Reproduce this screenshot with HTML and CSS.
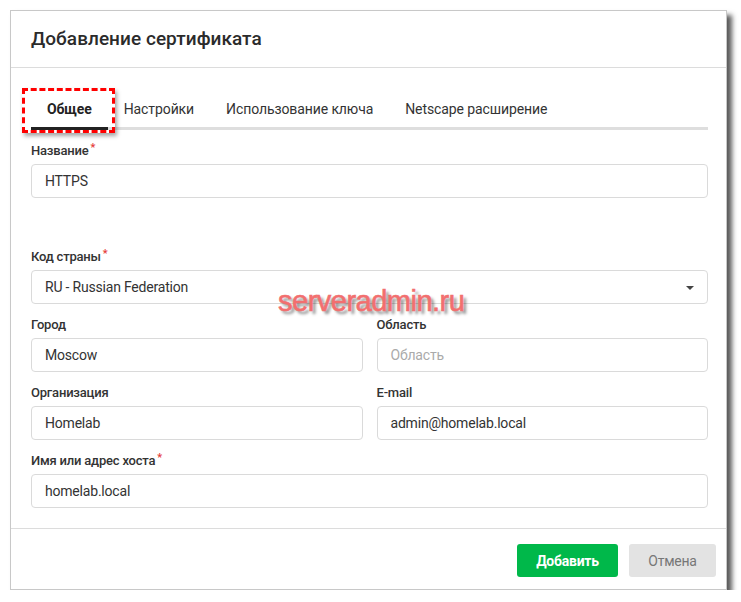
FILE: index.html
```html
<!DOCTYPE html>
<html lang="ru">
<head>
<meta charset="utf-8">
<title>Добавление сертификата</title>
<link rel="stylesheet" href="styles.css">
</head>
<body>
<div class="dialog">
  <div class="header">Добавление сертификата</div>
  <div class="body">
    <div class="tabs">
      <div class="tab active">Общее<span class="mark"></span></div>
      <div class="tab">Настройки</div>
      <div class="tab">Использование ключа</div>
      <div class="tab">Netscape расширение</div>
    </div>
    <div class="field first">
      <div class="label">Название<span class="req">*</span></div>
      <div class="input">HTTPS</div>
    </div>
    <div class="field gap">
      <div class="label">Код страны<span class="req">*</span></div>
      <div class="input select">RU - Russian Federation<span class="caret"></span></div>
    </div>
    <div class="row">
      <div class="field">
        <div class="label">Город</div>
        <div class="input">Moscow</div>
      </div>
      <div class="field">
        <div class="label">Область</div>
        <div class="input placeholder">Область</div>
      </div>
    </div>
    <div class="row">
      <div class="field">
        <div class="label">Организация</div>
        <div class="input">Homelab</div>
      </div>
      <div class="field">
        <div class="label">E-mail</div>
        <div class="input">admin@homelab.local</div>
      </div>
    </div>
    <div class="field">
      <div class="label">Имя или адрес хоста<span class="req">*</span></div>
      <div class="input">homelab.local</div>
    </div>
  </div>
  <div class="footer">
    <button class="btn primary">Добавить</button>
    <button class="btn secondary">Отмена</button>
  </div>
  <div class="watermark">serveradmin.ru</div>
</div>
</body>
</html>
```
FILE: styles.css
```css
html, body {
  margin: 0;
  padding: 0;
  background: #fff;
}
body {
  font-family: Roboto, "Liberation Sans", Arial, sans-serif;
  color: #333;
}
.dialog {
  position: relative;
  margin: 10px 0 0 10px;
  width: 715px;
  height: 578px;
  border: 1px solid #c8c8c8;
  box-shadow: 5px 5px 5px rgba(0, 0, 0, 0.65);
  background: #fff;
  display: flex;
  flex-direction: column;
}
.header {
  height: 56px;
  line-height: 56px;
  padding-left: 20px;
  font-size: 19px;
  font-weight: 500;
  color: #2b2b2b;
  border-bottom: 1px solid #dcdcdc;
  letter-spacing: 0.05px;
}
.body {
  padding: 20px 18px 20px 20px;
  border-bottom: 1px solid #dcdcdc;
}
.tabs {
  display: flex;
  border-bottom: 3px solid #dedede;
  height: 39px;
}
.tab {
  position: relative;
  box-sizing: border-box;
  padding: 4px 16px 0;
  height: 39px;
  line-height: 35px;
  font-size: 14px;
  letter-spacing: -0.1px;
  color: #333;
}
.tab.active {
  font-weight: 700;
  color: #222;
}
.tab.active::after {
  content: "";
  position: absolute;
  left: 0;
  right: 0;
  bottom: -3px;
  height: 3px;
  background: #222;
}
.mark {
  position: absolute;
  left: -9px;
  top: 0;
  width: 87px;
  height: 39px;
  border: 3px dashed #f00;
  box-shadow: 2px 3px 4px rgba(0, 0, 0, 0.35);
}
.field {
  display: flex;
  flex-direction: column;
  margin-top: 12px;
  flex: 1;
}
.field.first {
  margin-top: 12px;
}
.field.gap {
  margin-top: 50px;
}
.row {
  display: flex;
  gap: 14px;
}
.label {
  font-size: 13px;
  font-weight: 500;
  line-height: 18px;
  margin-bottom: 4px;
  color: #333;
  letter-spacing: -0.2px;
}
.req {
  color: #e53935;
  font-size: 11px;
  vertical-align: top;
  margin-left: 2px;
  line-height: 12px;
}
.input {
  position: relative;
  box-sizing: border-box;
  height: 34px;
  line-height: 32px;
  border: 1px solid #dadada;
  border-radius: 4px;
  padding: 0 13px;
  font-size: 14px;
  letter-spacing: -0.2px;
  color: #333;
}
.input.placeholder {
  color: #aaa;
}
.caret {
  position: absolute;
  right: 13px;
  top: 15px;
  width: 0;
  height: 0;
  border-left: 4px solid transparent;
  border-right: 4px solid transparent;
  border-top: 4px solid #444;
}
.footer {
  display: flex;
  justify-content: flex-end;
  gap: 11px;
  padding: 15px 10px 0 0;
}
.btn {
  height: 33px;
  border: none;
  border-radius: 3px;
  font-family: Roboto, "Liberation Sans", Arial, sans-serif;
  font-size: 14px;
  letter-spacing: -0.25px;
  padding: 0;
}
.btn.primary {
  width: 101px;
  background: #00b84a;
  color: #fff;
  font-weight: 700;
}
.btn.secondary {
  width: 87px;
  background: #e3e3e3;
  color: #777;
}
.watermark {
  position: absolute;
  left: 267px;
  top: 274px;
  font-family: "Liberation Sans", Arial, sans-serif;
  font-size: 29px;
  color: #f26f6f;
  letter-spacing: -0.5px;
  -webkit-text-stroke: 0.6px #f26f6f;
  text-shadow: 3px 3px 3px rgba(0, 0, 0, 0.45);
}
```
